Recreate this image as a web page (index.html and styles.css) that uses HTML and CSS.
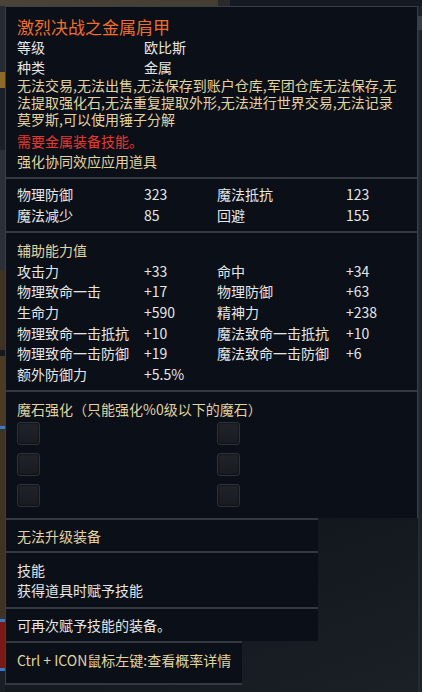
FILE: index.html
```html
<!DOCTYPE html>
<html lang="zh-CN">
<head>
<meta charset="utf-8">
<title>激烈决战之金属肩甲</title>
<link rel="stylesheet" href="styles.css">
</head>
<body>
<div class="top-strip">
  <div class="ts-brown"></div>
  <div class="ts-edge"></div>
  <div class="ts-dark"></div>
</div>
<div class="main-row">
  <div class="left-strip">
    <div class="ls ls-a"></div>
    <div class="ls ls-gold"></div>
    <div class="ls ls-b"></div>
    <div class="ls ls-c"></div>
    <div class="ls ls-brown"></div>
    <div class="ls ls-sep"></div>
    <div class="ls ls-brown2"></div>
    <div class="ls ls-blue"></div>
    <div class="ls ls-brown3"></div>
    <div class="ls ls-blue"></div>
    <div class="ls ls-red"></div>
    <div class="ls ls-blue"></div>
    <div class="ls ls-end"></div>
  </div>
  <div class="tooltip">
    <div class="panel">
      <section class="sec sec-head">
        <div class="title">激烈决战之金属肩甲</div>
        <div class="kv"><span>等级</span><span>欧比斯</span></div>
        <div class="kv"><span>种类</span><span>金属</span></div>
        <p class="desc">无法交易,无法出售,无法保存到账户仓库,军团仓库无法保存,无<br>法提取强化石,无法重复提取外形,无法进行世界交易,无法记录<br>莫罗斯,可以使用锤子分解</p>
        <div class="line red">需要金属装备技能。</div>
        <div class="line gold">强化协同效应应用道具</div>
      </section>
      <section class="sec sec-base">
        <div class="grid">
          <span>物理防御</span><span>323</span><span>魔法抵抗</span><span>123</span>
          <span>魔法减少</span><span>85</span><span>回避</span><span>155</span>
        </div>
      </section>
      <section class="sec sec-bonus">
        <div class="line gold">辅助能力值</div>
        <div class="grid">
          <span>攻击力</span><span>+33</span><span>命中</span><span>+34</span>
          <span>物理致命一击</span><span>+17</span><span>物理防御</span><span>+63</span>
          <span>生命力</span><span>+590</span><span>精神力</span><span>+238</span>
          <span>物理致命一击抵抗</span><span>+10</span><span>魔法致命一击抵抗</span><span>+10</span>
          <span>物理致命一击防御</span><span>+19</span><span>魔法致命一击防御</span><span>+6</span>
          <span>额外防御力</span><span>+5.5%</span>
        </div>
      </section>
      <section class="sec sec-stone">
        <div class="line gold">魔石强化（只能强化%0级以下的魔石）</div>
        <div class="sockets">
          <div class="socket"></div><div class="socket"></div>
          <div class="socket"></div><div class="socket"></div>
          <div class="socket"></div><div class="socket"></div>
        </div>
      </section>
    </div>
    <section class="sub sub-1"><div class="line gold">无法升级装备</div></section>
    <section class="sub sub-2"><div class="line">技能</div><div class="line">获得道具时赋予技能</div></section>
    <section class="sub sub-3"><div class="line">可再次赋予技能的装备。</div></section>
    <section class="sub sub-4"><div class="line gold">Ctrl + ICON鼠标左键:查看概率详情</div></section>
  </div>
  <div class="right-strip">
    <div class="rs rs-a"></div>
    <div class="rs rs-light"></div>
    <div class="rs rs-b"></div>
  </div>
</div>
</body>
</html>
```

FILE: styles.css
```css
* { box-sizing: border-box; }
html, body { margin: 0; padding: 0; }
body {
  width: 422px;
  height: 692px;
  overflow: hidden;
  background: #0b0f16;
  font-family: "Noto Sans CJK SC", "Noto Sans", sans-serif;
  font-size: 14px;
  color: #e6e6e6;
}
.top-strip { display: flex; height: 6px; }
.ts-brown { width: 218px; background: linear-gradient(90deg, #4a4336, #453e32); }
.ts-edge { width: 12px; background: #2b2a2b; }
.ts-dark { flex: 1; background: #151a22; }

.main-row { display: flex; height: 686px; }
.left-strip { width: 5px; display: flex; flex-direction: column; }
.ls-a { height: 66px; background: #262a31; }
.ls-gold { height: 16px; background: #8c6a28; }
.ls-b { height: 62px; background: #1b2029; }
.ls-c { height: 120px; background: #2a2f38; }
.ls-brown { height: 80px; background: #3d3224; }
.ls-sep { height: 6px; background: #15191f; }
.ls-brown2 { height: 70px; background: #4a3a26; }
.ls-blue { height: 3px; background: #3c78c4; }
.ls-brown3 { height: 190px; background: #3f3326; }
.ls-red { height: 46px; background: #7a1a14; }
.ls-end { flex: 1; background: #1a1e25; }

.tooltip {
  width: 413px;
  background: linear-gradient(160deg, #0c1118 55%, #1b1f26 100%);
}
.right-strip { width: 4px; display: flex; flex-direction: column; background: #1d2128; }
.rs-a { height: 10px; background: #1e2229; }
.rs-light { height: 14px; background: #3a3e46; }
.rs-b { flex: 1; background: linear-gradient(90deg, #2a2e35, #1a1e25); }

.panel {
  background: #0a0f18;
  border: 1px solid #3a3e46;
  border-bottom: none;
}
.sec { padding-left: 11px; padding-right: 8px; }
.sec + .sec { border-top: 2px solid #343941; }

.line { line-height: 20px; height: 20px; white-space: nowrap; }
.gold { color: #e2d3a0; }
.red { color: #e8382f; }

.sec-head { padding-top: 10px; padding-bottom: 6px; }
.title { font-size: 17px; line-height: 20px; height: 20px; color: #ef6e2c; }
.kv { display: grid; grid-template-columns: 127px 1fr; line-height: 20px; height: 20px; }
.desc { margin: 0 0 3px; line-height: 17px; color: #e2d3a0; white-space: nowrap; }

.grid {
  display: grid;
  grid-template-columns: 127px 73px 129px 1fr;
  white-space: nowrap;
}
.sec-base { padding-top: 5px; padding-bottom: 5px; }
.sec-base .grid { grid-auto-rows: 21px; line-height: 21px; }
.sec-bonus { padding-top: 7px; padding-bottom: 5px; }
.sec-bonus .line { line-height: 20.7px; height: 20.7px; }
.sec-bonus .grid { grid-auto-rows: 20.7px; line-height: 20.7px; }

.sec-stone { padding-top: 7px; padding-bottom: 11px; }
.sockets {
  margin-top: 3px;
  display: grid;
  grid-template-columns: 200px 1fr;
  row-gap: 8px;
}
.socket {
  width: 23px;
  height: 23px;
  border-radius: 3px;
  background: linear-gradient(180deg, #202329, #181b20);
  border: 1px solid #2e3137;
  box-shadow: inset 0 0 2px #000;
}

.sub {
  width: 313px;
  background: #0a0f18;
  border-top: 2px solid #343941;
  border-left: 1px solid #3a3e46;
  padding-left: 11px;
}
.sub-1 { padding-top: 6px; padding-bottom: 5px; }
.sub-2 { padding-top: 7px; padding-bottom: 7px; }
.sub-3 { padding-top: 6px; padding-bottom: 6px; }
.sub-4 {
  width: 237px;
  padding-top: 7px;
  padding-bottom: 13px;
  border-bottom: 2px solid #343941;
}
```
